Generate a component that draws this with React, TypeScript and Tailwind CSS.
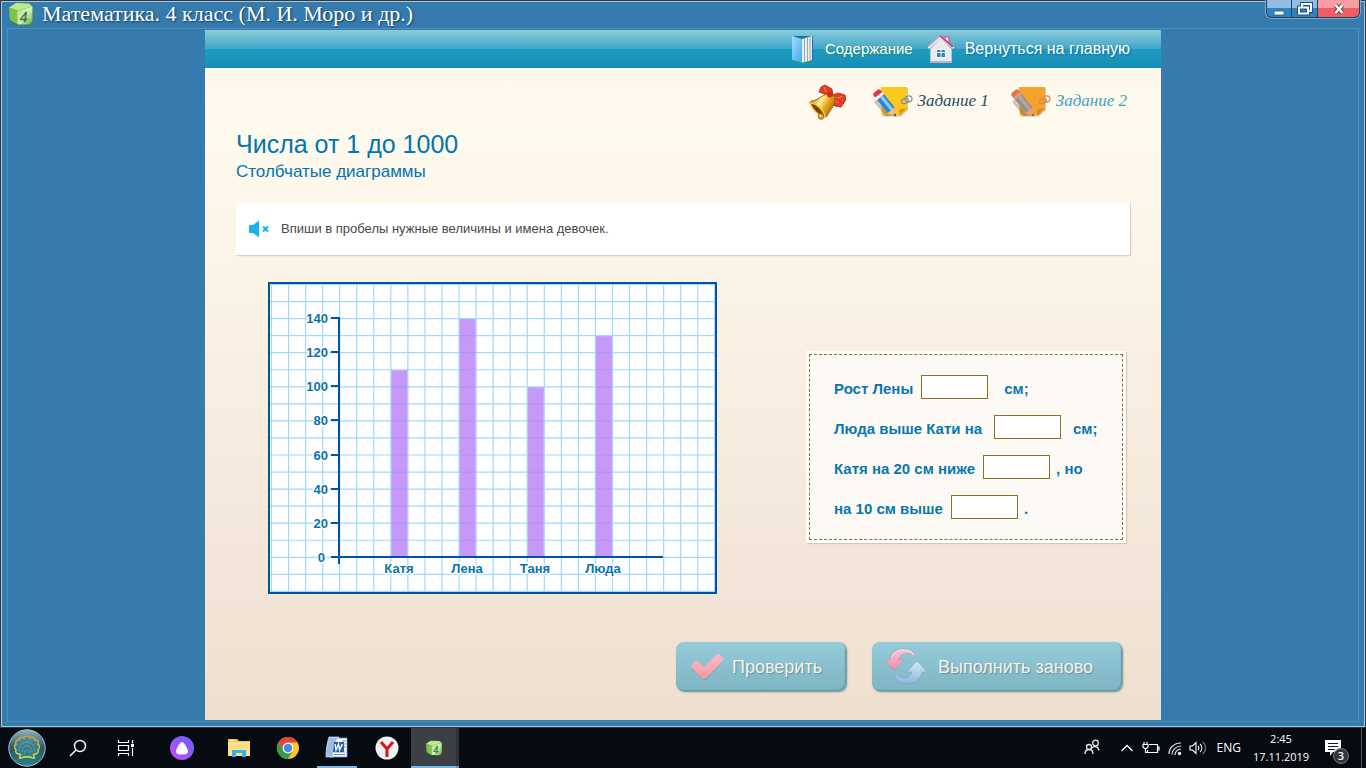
import React, { useState } from 'react';
import { clsx } from 'clsx';

const CELL = 17.05;
const ORIGIN_X = 3.5;
const ORIGIN_Y = 2.5;
const gx = (n: number) => ORIGIN_X + n * CELL;
const gy = (n: number) => ORIGIN_Y + n * CELL;

const BARS = [
  { name: 'Катя', value: 110, column: 7 },
  { name: 'Лена', value: 140, column: 11 },
  { name: 'Таня', value: 100, column: 15 },
  { name: 'Люда', value: 130, column: 19 },
];

const TICKS = [0, 20, 40, 60, 80, 100, 120, 140];
const tickY = (value: number) => Math.floor(gy(16 - value / 10));

const BLANKS = [
  { id: 'lena', before: 'Рост Лены', after: 'см;', gap: 'ml-2 mr-4' },
  { id: 'luda', before: 'Люда выше Кати на', after: 'см;', gap: 'ml-3 mr-3' },
  { id: 'katya', before: 'Катя на 20 см ниже', after: ', но', gap: 'ml-2 mr-1.5' },
  { id: 'tanya', before: 'на 10 см выше', after: '.', gap: 'ml-2 mr-1.5' },
];

const CubeIcon = ({ className }: { className: string }) => (
  <svg viewBox="0 0 26 24" className={className} aria-hidden="true">
    <defs>
      <linearGradient id="cube" x1="0" y1="0" x2="1" y2="1">
        <stop offset="0" stopColor="#a5dc6c" />
        <stop offset=".5" stopColor="#d8f4bd" />
        <stop offset="1" stopColor="#5fae35" />
      </linearGradient>
    </defs>
    <path d="M2 6 8 1.500h13l4 3.500v15l-3 3.500-13-.5-7-4z" fill="#3c7a2a" opacity=".8" />
    <path d="M1 5.500 8 1l13 .5 3.500 3L9 8.500z" fill="#bdea8f" />
    <path d="m1 5.500 8 3 .5 14L2 18z" fill="#7cc44d" />
    <path d="m9 8.500 15.500-4V19L22 22.500H9.500z" fill="url(#cube)" />
    <text x="12" y="20" fontSize="15" fontStyle="italic" fontFamily="Liberation Serif, serif" fill="#2f6f49" stroke="#2f6f49" strokeWidth=".4">4</text>
  </svg>
);

const BookIcon = () => (
  <svg viewBox="0 0 24 30" className="h-[30px] w-6" aria-hidden="true">
    <defs>
      <linearGradient id="cover" x1="0" y1="0" x2="1" y2="1">
        <stop offset="0" stopColor="#a7dcff" />
        <stop offset="1" stopColor="#38aaf2" />
      </linearGradient>
    </defs>
    <path d="M2 2h20v25l-10 2z" fill="#1774a6" />
    <path d="m11 5 10-3v24l-10 3z" fill="#e9edf0" />
    <path d="M13.500 4v24M16.500 3.500v24M19 3v24" stroke="#9ca6ae" strokeWidth="1" />
    <path d="m1 2 10 3v24L1 26z" fill="url(#cover)" />
    <path d="m1 26 10 3.300L22 27" stroke="#389a60" fill="none" />
  </svg>
);

const HouseIcon = () => (
  <svg viewBox="0 0 28 30" className="h-[30px] w-7" aria-hidden="true">
    <path d="M18 3h4v7h-4z" fill="#f2dce6" stroke="#b53b6c" strokeWidth=".8" />
    <path d="M3.500 15 14 4l10.500 11v13h-21z" fill="#e9eaf0" stroke="#c9cbd4" strokeWidth=".6" />
    <path d="M3 28h22" stroke="#b5b5bd" strokeWidth="2" />
    <path d="M1.500 14 14 2.500 26.500 14" fill="none" stroke="#fff" strokeWidth="2.200" />
    <path d="m2 12.500 12-11" fill="none" stroke="#f0a5bd" strokeWidth="1.600" />
    <path d="m13 1.500 13 11.500" fill="none" stroke="#d13f76" strokeWidth="1.800" />
    <path d="M9.500 15.500h9v8h-9z" fill="#2f87c4" stroke="#fff" strokeWidth="1" />
    <path d="M14 16v7M10 18.500h8" stroke="#eef6fb" strokeWidth="1" />
  </svg>
);

const BellIcon = () => (
  <svg viewBox="0 0 38 37" className="h-[37px] w-[38px]" aria-hidden="true">
    <defs>
      <linearGradient id="bell" x1="0" y1=".3" x2="1" y2=".8">
        <stop offset="0" stopColor="#c37a0c" />
        <stop offset=".35" stopColor="#fff09a" />
        <stop offset=".6" stopColor="#e7a51b" />
        <stop offset="1" stopColor="#9c5706" />
      </linearGradient>
    </defs>
    <path d="M19 12 11 9l2-5 4-2 7 4 1 6z" fill="#e33e20" stroke="#a92712" strokeWidth=".8" />
    <path d="m22 13 8-3 7 2 1 5-5 7-6-1-5-5z" fill="#e33e20" stroke="#a92712" strokeWidth=".8" />
    <path d="m24 14 6 1 5-2M25 17l6 3M18 9l-2-5" stroke="#fa8365" fill="none" />
    <path d="M19 11c6-1 9 3 8 7-1 6-5 9-8 15-1 2-3 1-5-1L3 22c-2-2-1-4 1-4 6-1 9-5 15-7z" fill="url(#bell)" stroke="#8a4e07" strokeWidth=".8" />
    <path d="M2 20c6 0 14 7 15 14-6-1-13-7-15-14z" fill="#7a4207" stroke="#f4c846" strokeWidth="1.500" />
    <circle cx="13" cy="33.500" r="2.800" fill="#e5a91f" stroke="#895008" strokeWidth=".8" />
    <circle cx="12.500" cy="32.500" r="1" fill="#fff1a6" />
    <circle cx="22" cy="11.500" r="3" fill="#c92c14" />
  </svg>
);

const NoteIcon = ({ faded = false }: { faded?: boolean }) => (
  <svg viewBox="0 0 40 38" className="h-[38px] w-10" aria-hidden="true">
    <path d="M8 6h27v22l-7 6.500H9z" fill="#9d8a61" opacity=".45" />
    <path d="M8 5h26v22l-6 6H9z" fill={faded ? '#f6a32e' : '#fcc81c'} />
    <path d="m34 26-7.500 7.500-.5-6z" fill={faded ? '#e18522' : '#e0970e'} />
    <g transform="translate(5 12) rotate(51)">
      <path d="M3 5h18l6-4-5 7H4z" fill="#59431a" opacity=".3" />
      <rect x="-3.500" y="-4.500" width="7" height="9" rx="2.500" fill={faded ? '#e5763d' : '#e8343a'} />
      <path d="M1-4.500h4v9H1z" fill={faded ? '#c3a58c' : '#eef3f8'} />
      <path d="M4-4.500h17v9H4z" fill={faded ? '#9b9189' : '#2c86d2'} />
      <path d="M4-2.500h17v3H4z" fill={faded ? '#b4a89c' : '#8ccbf8'} />
      <path d="m21-4.500 8 4.500-8 4.500z" fill={faded ? '#e9a36c' : '#f5bc83'} />
      <path d="m26-1.700 3 1.700-3 1.700z" fill={faded ? '#93634b' : '#60463f'} />
    </g>
    <g fill="none" stroke={faded ? '#d98b49' : '#8b9298'} strokeWidth="1.300">
      <ellipse cx="32" cy="19" rx="3.500" ry="2.500" transform="rotate(-20 32 19)" />
      <ellipse cx="35.500" cy="17" rx="3.500" ry="3" transform="rotate(-20 35.500 17)" />
    </g>
  </svg>
);

const MuteIcon = () => (
  <svg viewBox="0 0 22 18" className="h-[18px] w-[22px]" aria-hidden="true">
    <path d="M1 5h4l6-4.500v17L5 13H1z" fill="#18b2ec" />
    <path d="m15 6.500 5 5M20 6.500l-5 5" stroke="#18b2ec" strokeWidth="2" />
  </svg>
);

const CheckIcon = () => (
  <svg viewBox="0 0 34 28" className="h-7 w-[34px]" aria-hidden="true">
    <defs>
      <linearGradient id="check" x1="0" y1="0" x2="0" y2="1">
        <stop offset="0" stopColor="#fbb9cb" />
        <stop offset="1" stopColor="#f598a4" />
      </linearGradient>
    </defs>
    <path d="m2 14.500 5-5 2 .2 6 5.300L27.500 2l2 .2 4 4.300v2L15.500 27h-2L1 15.500z" fill="#4c7e8e" opacity=".3" />
    <path d="m1 12.500 4.500-4.500H7.500l6.500 6L27 1h2l4.500 4.500v2L15 26h-2L1 14z" fill="url(#check)" />
  </svg>
);

const RestartIcon = () => (
  <svg viewBox="0 0 44 37" className="h-[37px] w-11" aria-hidden="true">
    <defs>
      <linearGradient id="pinkArrow" x1="0" y1="0" x2="0" y2="1">
        <stop offset="0" stopColor="#fbc3d6" />
        <stop offset="1" stopColor="#ef8fac" />
      </linearGradient>
      <linearGradient id="blueArrow" x1="0" y1="0" x2="0" y2="1">
        <stop offset="0" stopColor="#d5e6ef" />
        <stop offset="1" stopColor="#8cb9e6" />
      </linearGradient>
    </defs>
    <g stroke="#668f9c" strokeOpacity=".35" strokeWidth=".8">
      <path d="M31.500 10C27 4 17 3 15 12h5l-9 9.500H9L.5 12H6C6 5 12 1 20 1s11 4 11.500 9z" fill="url(#pinkArrow)" />
      <path d="M11 25.500c6 6 15 7 17-1.500h-5l9-10h2l9 10h-5c-1 7-8 11.500-16 11.500-6 0-11-4-11-10z" fill="url(#blueArrow)" />
    </g>
    <path d="M8 9c2-5 7-7 12-7 4 0 8 1.500 10 5" fill="none" stroke="#fff" strokeOpacity=".6" />
  </svg>
);

const ShellIcon = () => (
  <svg viewBox="0 0 38 38" className="h-[38px] w-[38px]" aria-hidden="true">
    <defs>
      <linearGradient id="orb" x1="0" y1="0" x2="0" y2="1">
        <stop offset="0" stopColor="#8fb0bb" />
        <stop offset=".5" stopColor="#265969" />
        <stop offset="1" stopColor="#2b8390" />
      </linearGradient>
      <linearGradient id="shell" x1="0" y1="0" x2="0" y2="1">
        <stop offset="0" stopColor="#f09b2a" />
        <stop offset="1" stopColor="#e4e43c" />
      </linearGradient>
    </defs>
    <circle cx="19" cy="19" r="18.200" fill="url(#orb)" stroke="#a8c6cf" />
    <path d="M11.500 29l1-3.500C9 25.500 6.500 23 8 21c-2-2-2-5 0-5.500-1-3 .5-5 3-4.500 .5-3 3.500-3.500 5-2 1-2.500 5-2.500 6 0 1.500-1.500 4.500-1 5 2 2.500-.5 4 1.500 3 4.500 2 .5 2 3.500 0 5.500 1.500 2-1 4.500-4.500 4.500l1 3.500c-2 .7-3-1-4.500-1h-6c-1.500 0-2.500 1.700-4.500 1z" fill="#3f8f9c" fillOpacity=".6" stroke="url(#shell)" strokeWidth="1.300" />
    <g fill="none" stroke="#7fc2cf" strokeOpacity=".5">
      <path d="M11 22c0-12 16-12 16 0M14 23c0-8 10-8 10 0M16.500 24c0-4 5-4 5 0" />
    </g>
  </svg>
);

const FolderIcon = () => (
  <svg viewBox="0 0 22 20" className="h-5 w-[22px]" aria-hidden="true">
    <path d="M0 1h9l2 2h11v15H0z" fill="#f6c44c" />
    <path d="M0 4h22v14H0z" fill="#ffe08a" />
    <path d="M2 2.500h4" stroke="#fff" />
    <path d="M4 19v-7h14v7h-4v-4H8v4z" fill="#37b3ea" />
  </svg>
);

const ChromeIcon = () => (
  <svg viewBox="0 0 22 22" className="h-[22px] w-[22px]" aria-hidden="true">
    <circle cx="11" cy="11" r="11" fill="#fbc72b" />
    <path d="M1.500 5.500A11 11 0 0 1 20.500 5.500H11A5.500 5.500 0 0 0 6.200 13.700z" fill="#e2433a" />
    <path d="M1.500 5.500A11 11 0 0 0 11 22l4.800-8.200a5.500 5.500 0 0 1-9.600 0z" fill="#2f9e50" />
    <circle cx="11" cy="11" r="5.200" fill="#fff" />
    <circle cx="11" cy="11" r="4.200" fill="#4a86ee" />
  </svg>
);

const WordIcon = () => (
  <svg viewBox="0 0 24 24" className="h-6 w-6" aria-hidden="true">
    <path d="M7 2h15v19H5z" fill="#fff" stroke="#6c8dbf" strokeWidth=".8" />
    <path d="M9 16h11M9 18.500h11M17 5h4M18 8h3M18 11h3" stroke="#6087c0" />
    <path d="M4 1h10C9 7 8 15 8 21H1C1 13 2 7 4 1z" fill="#9cbde7" stroke="#dfeaf7" strokeWidth=".7" />
    <path d="M9 6h10v10H8z" fill="#2b5da8" />
    <path d="m10 8 1 6L13.500 8l1 6 3-6" fill="none" stroke="#fff" strokeWidth="1.400" />
  </svg>
);

const MeasureChart = () => (
  <svg viewBox="0 0 449 312" className="h-[312px] w-[449px] shrink-0 bg-white" role="img" aria-label="Столбчатая диаграмма">
    <g stroke="#9fd9fd" strokeWidth="1.200">
      {Array.from({ length: 27 }, (_, i) => (
        <line key={`v${i}`} x1={gx(i)} x2={gx(i)} y1="2" y2="310" />
      ))}
      {Array.from({ length: 19 }, (_, i) => (
        <line key={`h${i}`} x1="2" x2="447" y1={gy(i)} y2={gy(i)} />
      ))}
    </g>
    <rect x="1" y="1" width="447" height="310" fill="none" stroke="#0054a6" strokeWidth="2" />

    {BARS.map((bar) => {
      const top = gy(16 - bar.value / 10) + 0.5;
      return (
        <rect key={bar.name} x={gx(bar.column) + 0.5} y={top} width="16" height={gy(16) - top} fill="#b880f6" fillOpacity=".8" />
      );
    })}

    <g stroke="#0054a6" strokeWidth="2">
      <line x1="71" x2="71" y1="35" y2="282" />
      <line x1="64" x2="395" y1="275" y2="275" />
      {TICKS.map((tick) => (
        <line key={tick} x1="63" x2="71" y1={tickY(tick)} y2={tickY(tick)} />
      ))}
    </g>

    <g fill="#0a72ae" stroke="#fff" strokeWidth="3" strokeLinejoin="round" paintOrder="stroke" fontFamily="Liberation Sans, Arial, sans-serif" fontWeight="700" fontSize="13">
      {TICKS.map((tick) => (
        <text key={tick} x={tick === 0 ? 57 : 60} y={tickY(tick) + 5} textAnchor="end">{tick}</text>
      ))}
      {BARS.map((bar) => (
        <text key={bar.name} x={Math.floor(gx(bar.column + 0.5))} y="291" textAnchor="middle">{bar.name}</text>
      ))}
    </g>
  </svg>
);

const Taskbar = () => (
  <footer className="flex h-10 items-center bg-[#060a11] font-['Open_Sans',sans-serif] text-white">
    <button aria-label="Пуск" className="ml-2 mr-2"><ShellIcon /></button>
    <button aria-label="Поиск" className="flex h-full w-12 items-center justify-center">
      <svg viewBox="0 0 18 18" className="h-[18px] w-[18px]" fill="none" stroke="#fff" strokeWidth="1.400" aria-hidden="true">
        <circle cx="11" cy="7" r="5.500" />
        <path d="m7 11-6 6" />
      </svg>
    </button>
    <button aria-label="Представление задач" className="flex h-full w-12 items-center justify-center">
      <svg viewBox="0 0 18 18" className="h-[18px] w-[18px]" fill="none" stroke="#fff" strokeWidth="1.200" aria-hidden="true">
        <path d="M1.500 1v2.500h10V1M1.500 17v-2.500h10V17M1.500 6.500h10v5h-10zM15.500 1v3.500M15.500 9v8" />
        <path d="M14 5h3v3h-3z" fill="#fff" stroke="none" />
      </svg>
    </button>
    <button aria-label="Алиса" className="ml-2 flex h-full w-12 items-center justify-center">
      <svg viewBox="0 0 24 24" className="h-6 w-6" aria-hidden="true">
        <defs>
          <linearGradient id="alice" x1="1" y1="0" x2="0" y2="1">
            <stop offset="0" stopColor="#6a5cff" />
            <stop offset="1" stopColor="#c153f4" />
          </linearGradient>
        </defs>
        <circle cx="12" cy="12" r="12" fill="url(#alice)" />
        <path d="M12 6c2 0 6 7 6 9.500s-3 3-6 3-6-.5-6-3S10 6 12 6z" fill="#fff" />
      </svg>
    </button>
    <button aria-label="Проводник" className="ml-2 flex h-full w-[49px] items-center justify-center"><FolderIcon /></button>
    <button aria-label="Chrome" className="flex h-full w-[49px] items-center justify-center"><ChromeIcon /></button>
    <button aria-label="Word" className="mx-[5px] flex h-full w-10 items-center justify-center border-y-2 border-t-transparent border-b-[#76b9ed]"><WordIcon /></button>
    <button aria-label="Яндекс" className="flex h-full w-[49px] items-center justify-center">
      <svg viewBox="0 0 24 24" className="h-6 w-6" aria-hidden="true">
        <circle cx="12" cy="12" r="11.500" fill="#f2f2f2" />
        <path d="m6 6 6 7 6-7M12 12.500V21" fill="none" stroke="#d8151c" strokeWidth="3" />
      </svg>
    </button>
    <button aria-label="Математика" className="flex h-full w-[45px] items-center justify-center border-y-2 border-t-transparent border-b-[#76b9ed] bg-[#3c4045] bg-clip-border"><CubeIcon className="h-4 w-[18px]" /></button>
    <span className="h-full w-[3px] border-b-2 border-b-[#5e93bd] bg-[#303439]" />

    <div className="ml-auto flex h-full items-center">
      <svg viewBox="0 0 16 18" className="mr-5 h-[18px] w-4" fill="none" stroke="#e8e8e8" strokeWidth="1.300" aria-hidden="true">
        <circle cx="5" cy="8" r="2.500" />
        <circle cx="11.500" cy="4" r="2.800" />
        <path d="M1 15c0-3 2-4.500 4-4.500S9 12 9 15M8 9c1.500-2 6-2.500 7 2.500" />
      </svg>
      <svg viewBox="0 0 14 8" className="mr-2 h-2 w-3.5" fill="none" stroke="#fff" strokeWidth="1.400" aria-hidden="true">
        <path d="m1.500 7 5.500-5.500L12.500 7" />
      </svg>
      <svg viewBox="0 0 18 14" className="mr-2 h-3.5 w-[18px]" fill="none" stroke="#fff" strokeWidth="1.200" aria-hidden="true">
        <path d="M7 3.500h8.500v8H5.500V9M15.500 6H17v3h-1.500M2 1v2M5 1v2M1 3.500h5v2.500L4.500 7.500h-2L1 6zM3.500 8v3.500h2" />
      </svg>
      <svg viewBox="0 0 15 15" className="mr-1.5 h-[15px] w-[15px]" fill="none" stroke="#e0e0e0" strokeWidth="1.200" aria-hidden="true">
        <path d="M1 13C1 7 6 2 13 2M4 13.500C4 9 8 5 13 5M7 14c0-3 2.500-6 6-6" />
        <circle cx="11.500" cy="12.500" r="1.700" fill="#fff" stroke="none" />
      </svg>
      <svg viewBox="0 0 18 14" className="mr-2.5 h-3.5 w-[18px]" fill="none" stroke="#fff" strokeWidth="1.100" aria-hidden="true">
        <path d="M1 5h2.500L7 1.500v11L3.500 9H1zM9 5c1 1 1 3 0 4M11 3c2.500 2 2.500 6 0 8" />
        <path d="M13.500 1c4 3 4 9 0 12" stroke="#777" />
      </svg>
      <span className="text-xs">ENG</span>
      <time className="ml-2.5 flex w-[60px] flex-col text-center text-[11px] leading-[18px]">
        <span>2:45</span>
        <span>17.11.2019</span>
      </time>
      <button aria-label="Уведомления: 3" className="relative ml-3 mr-3 h-10 w-[26px]">
        <svg viewBox="0 0 26 40" className="h-10 w-[26px]" aria-hidden="true">
          <path d="M2 12h16v12h-8l-3 4v-4H2z" fill="#fff" />
          <path d="M5 15.500h10M5 18.500h10M5 21.500h7" stroke="#10141b" />
        </svg>
        <span className="absolute bottom-1 right-0 h-4 w-4 rounded-full border border-[#777] bg-[#33363b] text-[11px] font-semibold leading-[14px]">3</span>
      </button>
      <span className="mr-1 h-full w-px bg-[#55585c]" />
    </div>
  </footer>
);

export default function App() {
  const [answers, setAnswers] = useState<Record<string, string>>({});

  return (
    <div className="flex min-h-screen flex-col bg-[#357bad] font-['Liberation_Sans',Arial,sans-serif]">
      <div className="flex flex-1 flex-col border border-[#38363d]">
        <div className="flex flex-1 flex-col border border-[#a4c8e2]">
          {/* Title bar */}
          <div className="flex h-[26px] items-start justify-between pl-1.5">
            <div className="flex items-center gap-2">
              <CubeIcon className="h-6 w-[26px]" />
              <h1 className="font-['Liberation_Serif',serif] text-[22px] leading-6 text-white [text-shadow:1px_1px_2px_#173b5a]">Математика. 4 класс (М. И. Моро и др.)</h1>
            </div>
            <div className="mr-1 -mt-0.5 flex h-[18px] overflow-hidden rounded-b-md border border-t-0 border-[#2d3d50] shadow-[0_0_0_1px_#79aacf]">
              <button aria-label="Свернуть" className="flex w-[25px] items-center justify-center border-r border-[#24435f] bg-linear-to-b from-[#93bde0] from-50% to-[#3082c0] to-50%">
                <svg viewBox="0 0 12 14" className="h-3.5 w-3"><path d="M1 9h10v4H1z" fill="#fff" stroke="#2d5577" strokeWidth=".8" /></svg>
              </button>
              <button aria-label="Восстановить" className="flex w-[26px] items-center justify-center border-r border-[#24435f] bg-linear-to-b from-[#93bde0] from-50% to-[#3082c0] to-50%">
                <svg viewBox="0 0 16 14" className="h-3.5 w-4" fill="none">
                  <path d="M5 5V2h9v7h-3M2 5.500h9v6H2z" stroke="#1f527c" strokeWidth="4" />
                  <path d="M5 5V2h9v7h-3M2 5.500h9v6H2z" stroke="#fff" strokeWidth="2" />
                </svg>
              </button>
              <button aria-label="Закрыть" className="flex w-[41px] items-center justify-center bg-linear-to-b from-[#fa9fa4] from-50% to-[#f15c64] to-50%">
                <svg viewBox="0 0 12 12" className="h-3 w-3" fill="none">
                  <path d="m2.500 2 7 8M9.500 2l-7 8" stroke="#6e3943" strokeWidth="4.200" />
                  <path d="m2.500 2 7 8M9.500 2l-7 8" stroke="#fff" strokeWidth="2.600" />
                </svg>
              </button>
            </div>
          </div>

          <div className="mx-[5px] mb-1 flex flex-1 justify-center border border-[#4d90b8] py-px">
            <main className="flex w-full max-w-[956px] flex-col bg-linear-to-b from-[#fff6ec] via-[#fffaee] via-15% to-[#efdfd0]">
              <nav className="flex h-[38px] items-center justify-end bg-[linear-gradient(#8ccbdb_0,#3fa7c7_19px,#1f9ac0_19px,#1591b9)] pr-[31px] text-white">
                <a href="#contents" className="mr-3.5 flex items-center gap-2.5 text-[15px] [text-shadow:1px_1px_2px_#2d8d58]">
                  <BookIcon />
                  Содержание
                </a>
                <a href="#home" className="flex items-center gap-2.5 text-base [text-shadow:1px_1px_2px_#176c8d]">
                  <HouseIcon />
                  Вернуться на главную
                </a>
              </nav>

              {/* Task switcher */}
              <div className="mt-3.5 flex items-center justify-end pr-[34px] font-['Liberation_Serif',serif] text-[17px] italic">
                <button aria-label="Звонок" className="mr-[27px]"><BellIcon /></button>
                <a href="#task1" className="mr-[22px] flex items-center gap-[5px] text-[#1d5061]">
                  <NoteIcon />
                  Задание 1
                </a>
                <a href="#task2" className="flex items-center gap-[5px] text-[#3ba4c5]">
                  <NoteIcon faded />
                  Задание 2
                </a>
              </div>

              <div className="mt-2.5 px-[31px] text-[#0076b1]">
                <h2 className="text-[25px] leading-7">Числа от 1 до 1000</h2>
                <p className="text-[17px] leading-7">Столбчатые диаграммы</p>
              </div>

              <div className="mx-[31px] mt-[17px] flex h-[52px] items-center bg-white pl-3 text-[13px] text-[#484848] shadow-[1px_1px_1px_#d9d0c6]">
                <button aria-label="Звук выключен" className="mr-[11px]"><MuteIcon /></button>
                Впиши в пробелы нужные величины и имена девочек.
              </div>

              <div className="mt-[27px] flex items-start justify-between pl-[63px] pr-[35px]">
                <MeasureChart />
                <section className="mt-[69px] w-80 bg-white p-[3px] shadow-[1px_1px_1px_#d3c8c0]">
                  <div className="border border-dashed border-[#927022] bg-[#fdfaf6] pb-2.5 pl-6 pt-3.5 text-[15px] font-bold text-[#0a76b0]">
                    {BLANKS.map((blank) => (
                      <div key={blank.id} className="flex h-10 items-center whitespace-nowrap">
                        <label htmlFor={blank.id}>{blank.before}</label>
                        <input
                          id={blank.id}
                          type="text"
                          className={clsx('mb-1 h-6 w-[67px] border border-[#927022] bg-white px-1 text-center outline-none', blank.gap)}
                          value={answers[blank.id] ?? ''}
                          onChange={(e) => setAnswers({ ...answers, [blank.id]: e.target.value })}
                        />
                        <span>{blank.after}</span>
                      </div>
                    ))}
                  </div>
                </section>
              </div>

              <div className="mb-7 mt-12 flex justify-end gap-[26px] pr-[39px] text-lg text-[#f8f3ee]">
                <button className="flex h-[49px] w-[170px] items-center gap-2 rounded-lg bg-linear-to-b from-[#96ccda] to-[#7eb5c3] pl-3.5 shadow-[1px_1px_2px_#698d96,inset_-1px_-1px_1px_#6597a3] [text-shadow:1px_1px_1px_#638c98]">
                  <CheckIcon />
                  Проверить
                </button>
                <button className="flex h-[49px] w-[250px] items-center gap-2.5 rounded-lg bg-linear-to-b from-[#96ccda] to-[#7eb5c3] pl-3 shadow-[1px_1px_2px_#698d96,inset_-1px_-1px_1px_#6597a3] [text-shadow:1px_1px_1px_#638c98]">
                  <RestartIcon />
                  Выполнить заново
                </button>
              </div>
            </main>
          </div>
        </div>
      </div>
      <Taskbar />
    </div>
  );
}
